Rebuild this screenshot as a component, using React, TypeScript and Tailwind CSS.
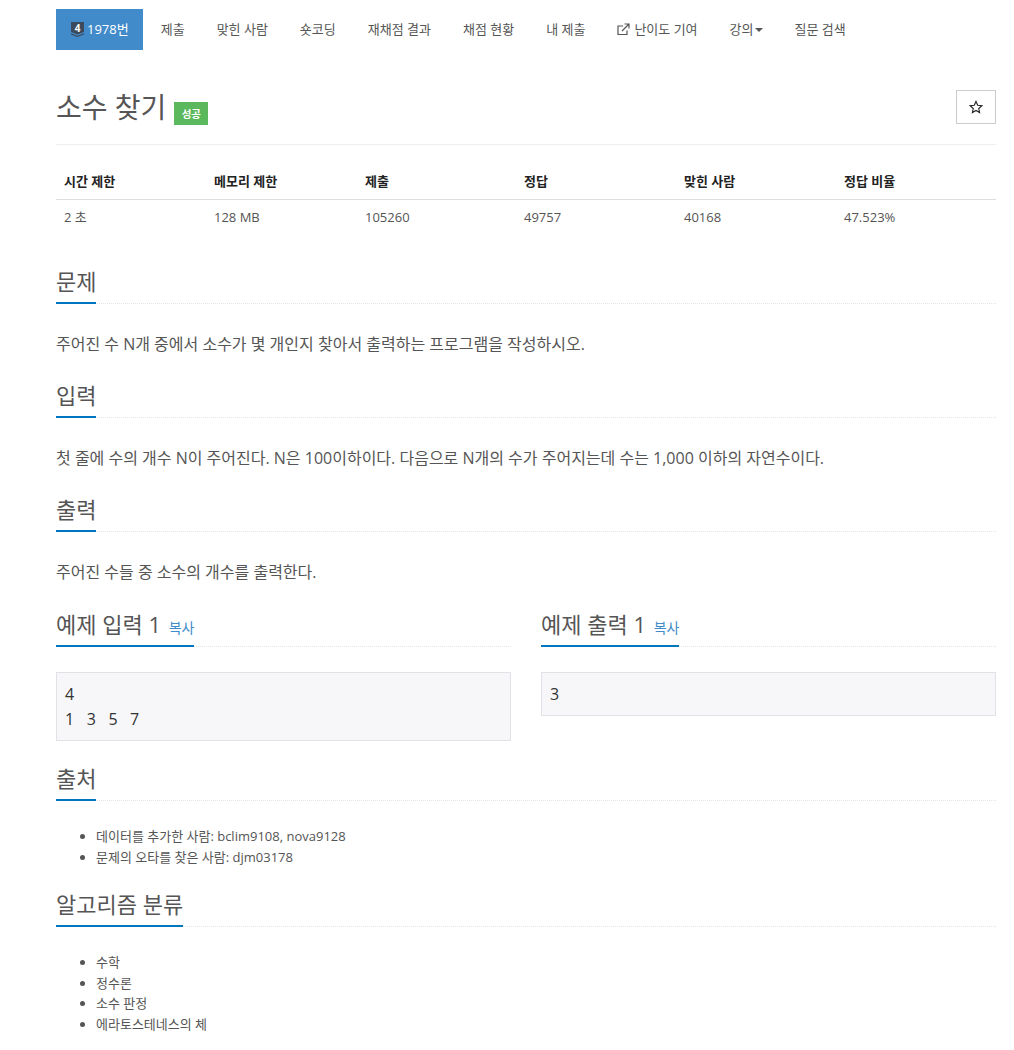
import React from "react";

function Nav({ children, active }: { children: React.ReactNode; active?: boolean }) {
  return (
    <a className={active ? "mr-[2px] flex h-[41px] items-center bg-[#428bca] pl-[15px] pr-[14px] text-white" : "flex h-[41px] items-center px-4 text-[#555]"}>
      {children}
    </a>
  );
}

function Heading({ children }: { children: React.ReactNode }) {
  return (
    <div className="border-b border-dotted border-[#e5e5e5]">
      <h2 className="mb-[-1px] inline-block h-[38px] border-b-2 border-[#0076c0] pb-[6px] align-bottom text-[22px] leading-[30px] text-[#555]">{children}</h2>
    </div>
  );
}

const tierBadge = (
  <svg width="13" height="15" viewBox="0 0 13 15" className="mr-[3px]">
    <path d="M0 0H13V10L6.5 12.5L0 10Z" fill="#3b4a5c" />
    <path d="M0 11.2L6.5 13.7L13 11.2V12.6L6.5 15L0 12.6Z" fill="#3b4a5c" />
    <text x="6.5" y="9.5" textAnchor="middle" fontSize="10" fontWeight="700" fill="#fff" fontFamily="'Open Sans', sans-serif">4</text>
  </svg>
);

export default function App() {
  return (
    <div className="min-h-[1050px] bg-white text-[16px] text-[#555]" style={{ fontFamily: "'Open Sans','Noto Sans CJK KR',sans-serif" }}>
      <div className="ml-[56px] w-[940px]">
        <nav className="flex pt-[9px] text-[13px]">
          <Nav active>{tierBadge}1978번</Nav>
          <Nav>제출</Nav>
          <Nav>맞힌 사람</Nav>
          <Nav>숏코딩</Nav>
          <Nav>재채점 결과</Nav>
          <Nav>채점 현황</Nav>
          <Nav>내 제출</Nav>
          <Nav>
            <svg width="13" height="13" viewBox="0 0 13 13" fill="none" stroke="#555" strokeWidth="1.2" className="mr-[4px]">
              <path d="M10 7.5V11.5H1V3H6" />
              <path d="M5 8L11.5 1.5M7.5 1H12V5.5" />
            </svg>
            난이도 기여
          </Nav>
          <Nav>
            강의
            <span className="ml-[1px] h-0 w-0 border-x-[4px] border-t-[4px] border-x-transparent border-t-[#555]" />
          </Nav>
          <Nav>질문 검색</Nav>
        </nav>

        <div className="mt-[40px] flex items-start justify-between border-b border-[#eee] pb-[20px]">
          <h1 className="flex h-[34px] items-end text-[28px] leading-[34px] text-[#555]">
            소수 찾기
            <span className="mb-[-1px] ml-[8px] flex h-[23px] w-[34px] items-center justify-center bg-[#5cb85c] text-[10.5px] font-bold text-white">성공</span>
          </h1>
          <button className="flex h-[34px] w-[40px] items-center justify-center border border-[#ccc] pb-[1px]">
            <svg width="14" height="14" viewBox="0 0 24 24" fill="none" stroke="#222" strokeWidth="1.9">
              <path d="M12 2.5L14.9 9L22 9.8L16.7 14.6L18.2 21.6L12 18L5.8 21.6L7.3 14.6L2 9.8L9.1 9Z" />
            </svg>
          </button>
        </div>

        <table className="mt-[20px] w-full table-fixed text-[13px]">
          <thead>
            <tr className="h-[34px] border-b border-[#ddd] text-left">
              <th className="w-[150px] pl-2 font-bold text-[#222]">시간 제한</th>
              <th className="w-[151px] pl-2 font-bold text-[#222]">메모리 제한</th>
              <th className="w-[159px] pl-2 font-bold text-[#222]">제출</th>
              <th className="w-[160px] pl-2 font-bold text-[#222]">정답</th>
              <th className="w-[160px] pl-2 font-bold text-[#222]">맞힌 사람</th>
              <th className="pl-2 font-bold text-[#222]">정답 비율</th>
            </tr>
          </thead>
          <tbody>
            <tr className="h-[36px] text-[#555]">
              <td className="pl-2">2 초</td>
              <td className="pl-2">128 MB</td>
              <td className="pl-2">105260</td>
              <td className="pl-2">49757</td>
              <td className="pl-2">40168</td>
              <td className="pl-2">47.523%</td>
            </tr>
          </tbody>
        </table>

        <section className="mt-[31px]">
          <Heading>문제</Heading>
          <p className="mt-[28px] leading-[24px]">주어진 수 N개 중에서 소수가 몇 개인지 찾아서 출력하는 프로그램을 작성하시오.</p>
        </section>
        <section className="mt-[24px]">
          <Heading>입력</Heading>
          <p className="mt-[28px] leading-[24px]">첫 줄에 수의 개수 N이 주어진다. N은 100이하이다. 다음으로 N개의 수가 주어지는데 수는 1,000 이하의 자연수이다.</p>
        </section>
        <section className="mt-[24px]">
          <Heading>출력</Heading>
          <p className="mt-[28px] leading-[24px]">주어진 수들 중 소수의 개수를 출력한다.</p>
        </section>

        <div className="mt-[25px] grid grid-cols-2 items-start gap-x-[30px]">
          {[
            { t: "예제 입력 1", v: "4\n1 3 5 7" },
            { t: "예제 출력 1", v: "3" },
          ].map((s) => (
            <div key={s.t}>
              <Heading>
                {s.t} <a className="ml-[2px] text-[14px] text-[#428bca]">복사</a>
              </Heading>
              <pre className="mt-[25px] border border-[#e1e1e8] bg-[#f7f7f9] px-2 py-[8.5px] text-[16px] leading-[25px] text-[#333]" style={{ fontFamily: "'Open Sans','Noto Sans CJK KR',sans-serif", wordSpacing: "8.4px" }}>{s.v}</pre>
            </div>
          ))}
        </div>

        <section className="mt-[22px]">
          <Heading>출처</Heading>
          <ul className="mt-[25px] list-disc pl-[40px] text-[13px] leading-[21px] text-[#555]">
            <li>데이터를 추가한 사람: bclim9108, nova9128</li>
            <li>문제의 오타를 찾은 사람: djm03178</li>
          </ul>
        </section>

        <section className="mt-[21px]">
          <Heading>알고리즘 분류</Heading>
          <ul className="mt-[25px] list-disc pl-[40px] text-[13px] leading-[20.7px] text-[#555]">
            <li>수학</li>
            <li>정수론</li>
            <li>소수 판정</li>
            <li>에라토스테네스의 체</li>
          </ul>
        </section>
      </div>
    </div>
  );
}
